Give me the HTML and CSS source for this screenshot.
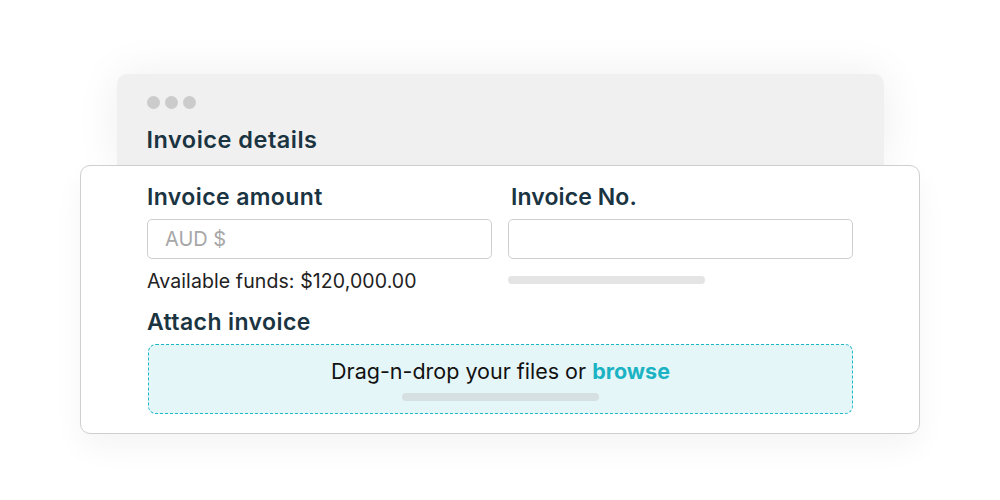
FILE: index.html
```html
<!DOCTYPE html>
<html lang="en">
<head>
<meta charset="UTF-8">
<title>Invoice details</title>
<link rel="stylesheet" href="styles.css">
</head>
<body>

<div class="stage">
	<div class="window">
		<div class="dots"><span></span><span></span><span></span></div>
		<h2 class="window_title">Invoice details</h2>
	</div>
	<div class="card">
		<div class="fields">
			<div class="field">
				<label class="label">Invoice amount</label>
				<div class="input placeholder">AUD $</div>
				<p class="hint">Available funds: $120,000.00</p>
			</div>
			<div class="field">
				<label class="label">Invoice No.</label>
				<div class="input"></div>
				<div class="skeleton"></div>
			</div>
		</div>
		<label class="label attach">Attach invoice</label>
		<div class="drop">
			<p class="drop_text">Drag-n-drop your files or <b>browse</b></p>
			<div class="skeleton drop_bar"></div>
		</div>
	</div>
</div>

</body>
</html>
```

FILE: styles.css
```css
body{margin:0;background:#fff;font-family:"Inter","Noto Sans",sans-serif;color:#1e3340;}
.stage{width:1000px;height:500px;padding-top:74px;box-sizing:border-box;}
.window{width:767px;height:91px;margin:0 auto;background:#f0f0f0;border-radius:10px 10px 0 0;padding:22px 30px 0;box-sizing:border-box;box-shadow:0 0 45px rgba(0,0,0,.07);}
.dots{display:flex;gap:5px;}
.dots span{width:13px;height:13px;border-radius:50%;background:#cbcbcb;}
.window_title{margin:17px 0 0;font-size:23.5px;font-weight:600;line-height:28px;color:#1b3442;letter-spacing:.5px;}
.card{width:840px;margin:0 auto;background:#fff;border:1px solid #cfcfcf;border-radius:10px;padding:16px 66px 19px;box-sizing:border-box;box-shadow:0 14px 30px rgba(0,0,0,.045);position:relative;}
.fields{display:grid;grid-template-columns:1fr 1fr;gap:16px;}
.label{display:block;font-size:23px;font-weight:600;line-height:30px;color:#1b3442;margin-bottom:7px;letter-spacing:.4px;}
.field:last-child .label{margin-left:3px;letter-spacing:.1px;}
.input{height:40px;border:1px solid #cfcfcf;border-radius:5px;box-sizing:border-box;padding:0 17px;font-size:20px;line-height:38px;}
.placeholder{color:#a8a8a8;}
.hint{margin:10px 0 0;font-size:19.5px;line-height:24px;color:#222;letter-spacing:.1px;}
.skeleton{width:197px;height:8px;border-radius:4px;background:#e4e4e4;margin-top:17px;}
.attach{margin-top:14px;}
.drop{height:70px;border:1px dashed #1db8c7;border-radius:8px;background:#e5f6f9;box-sizing:border-box;display:flex;flex-direction:column;align-items:center;padding-top:13px;margin-left:1px;}
.drop_text{margin:0;font-size:21.5px;line-height:26px;color:#111;}
.drop_text b{color:#1bb3c3;font-weight:700;}
.drop_bar{background:#d6dfe1;margin-top:9px;}
```
